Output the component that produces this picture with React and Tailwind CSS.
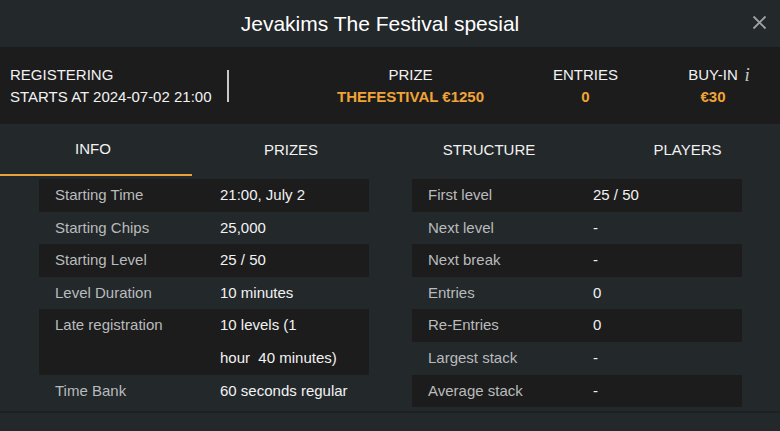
import React from "react";

const left = [
  ["Starting Time", "21:00, July 2"],
  ["Starting Chips", "25,000"],
  ["Starting Level", "25 / 50"],
  ["Level Duration", "10 minutes"],
  ["Late registration", "10 levels (1\nhour  40 minutes)"],
  ["Time Bank", "60 seconds regular"],
];
const right = [
  ["First level", "25 / 50"],
  ["Next level", "-"],
  ["Next break", "-"],
  ["Entries", "0"],
  ["Re-Entries", "0"],
  ["Largest stack", "-"],
  ["Average stack", "-"],
];

function Table({ rows }) {
  return (
    <div className="flex flex-col w-[330px]">
      {rows.map(([k, v], i) => (
        <div
          key={k}
          className={`flex text-[15px] leading-[32.6px] ${i % 2 === 0 ? "bg-[#1c1c1c]" : ""}`}
        >
          <div className="w-[181px] pl-4 text-[#b9bbbc] shrink-0">{k}</div>
          <div className="flex-1 pr-2 text-[#f2f2f2] whitespace-pre">{v}</div>
        </div>
      ))}
    </div>
  );
}

export default function App() {
  return (
    <div
      className="w-[780px] h-[431px] bg-[#23282b] flex flex-col overflow-hidden"
      style={{ fontFamily: '"Liberation Sans", Arial, sans-serif' }}
    >
      <div className="h-[47px] relative flex items-center justify-center pr-[20px] bg-[#23282b]">
        <div className="text-[21px] text-white">Jevakims The Festival spesial</div>
        <svg
          className="absolute right-[13px] top-[15px]"
          width="15"
          height="15"
          viewBox="0 0 15 15"
        >
          <path d="M1.5 1.5 L13.5 13.5 M13.5 1.5 L1.5 13.5" stroke="#9fa2a4" strokeWidth="1.8" />
        </svg>
      </div>
      <div className="h-[77px] bg-[#1c1c1c] flex items-center text-[15px] text-[#f2f2f2] whitespace-nowrap">
        <div className="pl-[10px] w-[227px] shrink-0 flex flex-col leading-[22px]">
          <div>REGISTERING</div>
          <div>STARTS AT 2024-07-02 21:00</div>
        </div>
        <div className="w-[1.5px] h-[32px] shrink-0 bg-[#c9c9c9]" />
        <div className="w-[32px] shrink-0" />
        <div className="w-[300px] shrink-0 flex flex-col items-center leading-[22px]">
          <div>PRIZE</div>
          <div className="text-[#f0a437] font-bold">THEFESTIVAL €1250</div>
        </div>
        <div className="w-[50px] shrink-0 flex flex-col items-center leading-[22px]">
          <div>ENTRIES</div>
          <div className="text-[#f0a437] font-bold">0</div>
        </div>
        <div className="ml-[78px] shrink-0 flex items-start gap-[7px]">
          <div className="w-[49px] flex flex-col items-center leading-[22px]">
            <div>BUY-IN</div>
            <div className="text-[#f0a437] font-bold">€30</div>
          </div>
          <span
            className="italic text-[#c9c9c9] text-[19px] leading-[22px]"
            style={{ fontFamily: '"Liberation Serif", serif' }}
          >
            i
          </span>
        </div>
      </div>
      <div className="h-[52px] flex shrink-0 text-[15px] text-[#f2f2f2]">
        <div className="w-[192px] shrink-0 flex items-center justify-center pr-[6px] border-b-2 border-[#e8a23a]">INFO</div>
        <div className="w-[198px] shrink-0 flex items-center justify-center">PRIZES</div>
        <div className="w-[198px] shrink-0 flex items-center justify-center">STRUCTURE</div>
        <div className="w-[199px] shrink-0 flex items-center justify-center">PLAYERS</div>
      </div>
      <div className="flex pt-[3px] pl-[39px] gap-[43px] h-[235px] shrink-0">
        <Table rows={left} />
        <Table rows={right} />
      </div>
      <div className="flex-1 border-t-2 border-[#1d2123] bg-[#23282b]" />
    </div>
  );
}
